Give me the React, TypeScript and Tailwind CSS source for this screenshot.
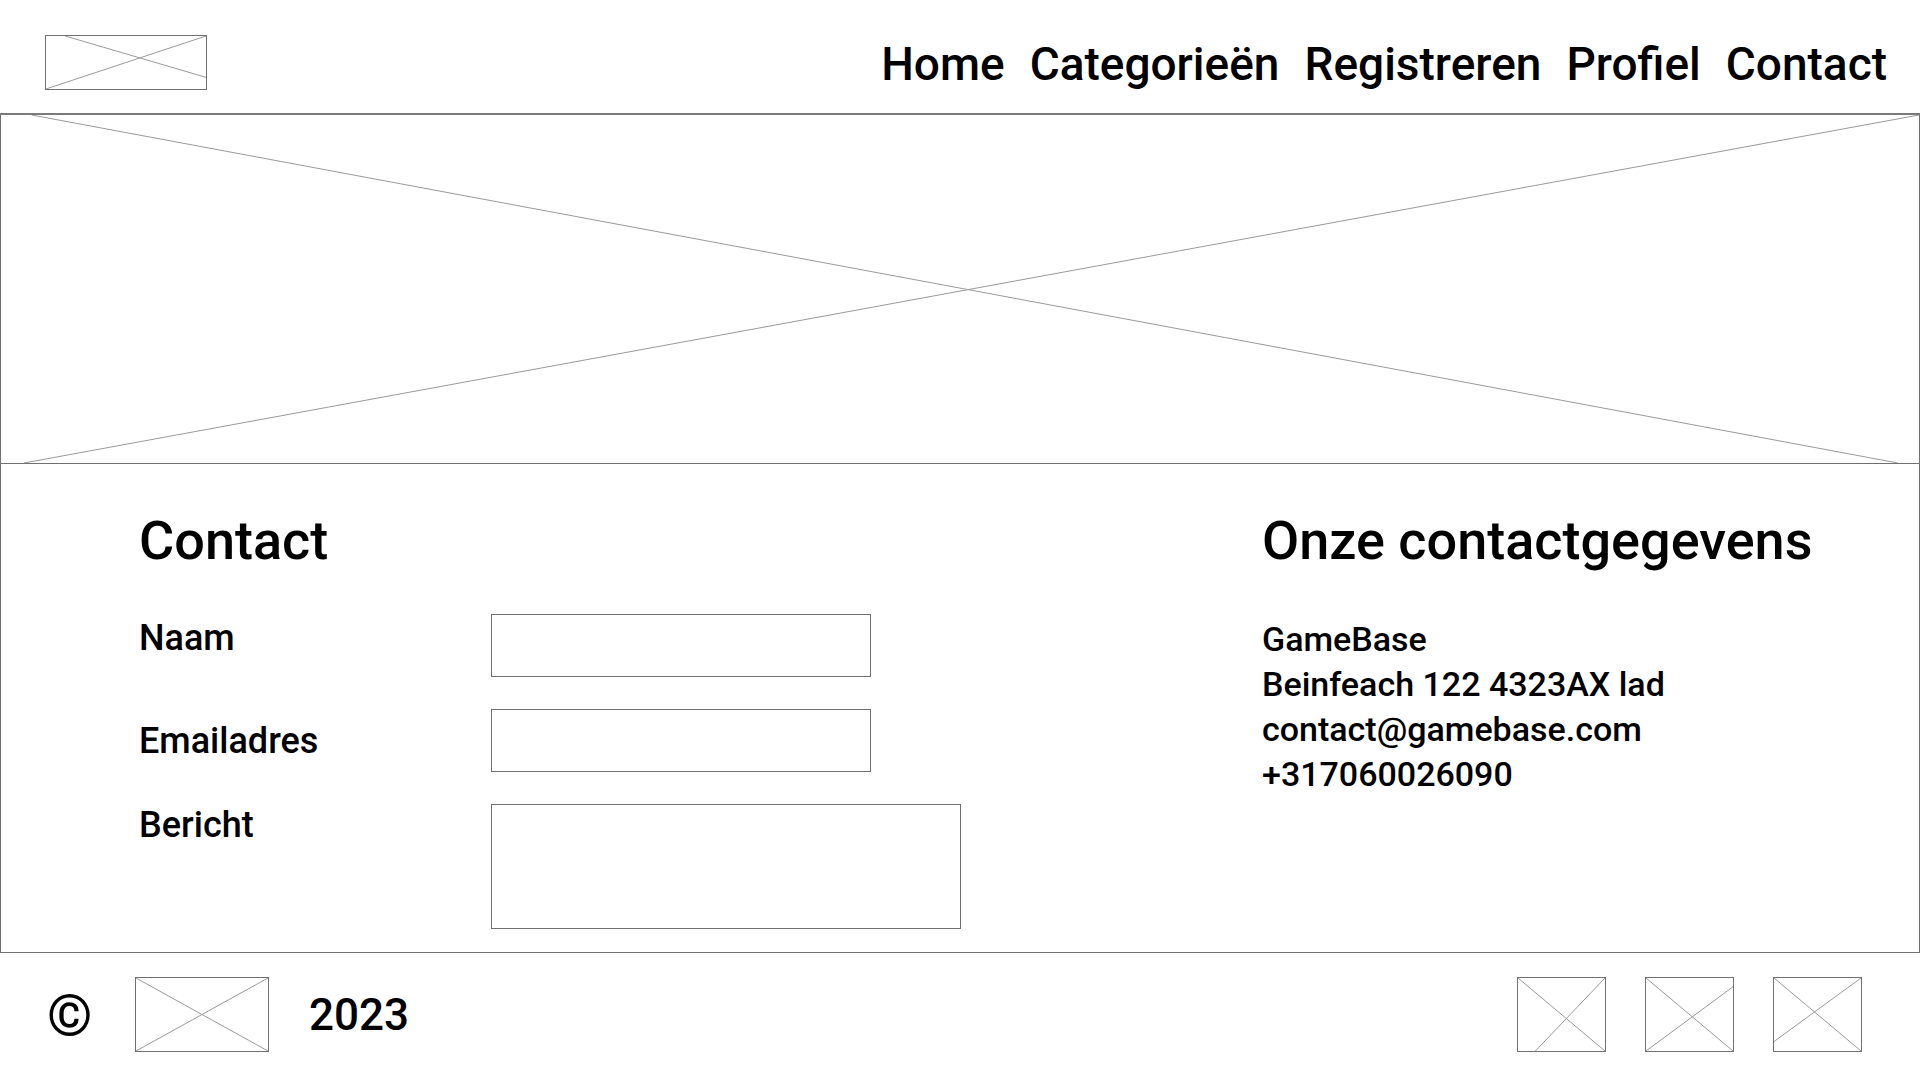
const font = { fontFamily: "Roboto, 'Noto Sans', sans-serif" };

type Line = [number, number, number, number];

const Placeholder = ({ className, lines }: { className: string; lines: Line[] }) => (
  <div className={`border border-[#707070] shrink-0 ${className}`}>
    <svg className="block w-full h-full" viewBox="0 0 100 100" preserveAspectRatio="none">
      {lines.map((l, i) => (
        <line
          key={i}
          x1={l[0]}
          y1={l[1]}
          x2={l[2]}
          y2={l[3]}
          stroke="#9a9a9a"
          strokeWidth={1}
          vectorEffect="non-scaling-stroke"
        />
      ))}
    </svg>
  </div>
);

const navItems = ["Home", "Categorieën", "Registreren", "Profiel", "Contact"];

export default function App() {
  return (
    <div className="w-[1920px] h-[1080px] flex flex-col bg-white text-black font-medium overflow-hidden" style={font}>
      {/* header */}
      <header className="h-[115px] shrink-0 flex justify-between border-b-2 border-[#7a7a7a]">
        <div className="pl-[45px] pt-[35px]">
          <Placeholder className="w-[162px] h-[55px]" lines={[[12, 0, 100, 78], [0, 100, 100, 0]]} />
        </div>
        <nav className="flex gap-[25px] pr-[33px] pt-[41px] text-[46px] leading-none">
          {navItems.map((item) => (
            <a key={item} href="#" className="block">
              {item}
            </a>
          ))}
        </nav>
      </header>

      {/* hero */}
      <Placeholder className="h-[349px] w-full border-t-0" lines={[[1.6, 0, 98.9, 100], [1.2, 100, 100, 0]]} />

      {/* content */}
      <section className="h-[489px] shrink-0 flex border-x border-b border-[#707070] pl-[138px] pt-[50px]">
        <div className="w-[1123px]">
          <h1 className="text-[54px] leading-none">Contact</h1>
          <div className="mt-[46px] flex flex-col gap-[32px] text-[36px] leading-none">
            <div className="flex">
              <label className="w-[352px] pt-[6px]">Naam</label>
              <input className="w-[380px] h-[63px] border border-[#707070] outline-none" />
            </div>
            <div className="flex">
              <label className="w-[352px] pt-[14px]">Emailadres</label>
              <input className="w-[380px] h-[63px] border border-[#707070] outline-none" />
            </div>
            <div className="flex">
              <label className="w-[352px] pt-[3px]">Bericht</label>
              <textarea className="w-[470px] h-[125px] border border-[#707070] outline-none resize-none" />
            </div>
          </div>
        </div>
        <div className="flex-1">
          <h2 className="text-[54px] leading-none">Onze contactgegevens</h2>
          <div className="mt-[49px] text-[34px] leading-[45px]">
            <p>GameBase</p>
            <p>Beinfeach 122 4323AX lad</p>
            <p>contact@gamebase.com</p>
            <p>+317060026090</p>
          </div>
        </div>
      </section>

      {/* footer */}
      <footer className="flex-1 flex justify-between items-start pt-[24px]">
        <div className="flex items-center pl-[47px]">
          <span className="text-[58px] leading-none w-[88px] font-bold">©</span>
          <Placeholder className="w-[134px] h-[75px]" lines={[[0, 0, 100, 100], [100, 0, 0, 100]]} />
          <span className="ml-[40px] text-[44px] leading-none">2023</span>
        </div>
        <div className="flex gap-[39px] pr-[58px]">
          <Placeholder className="w-[89px] h-[75px]" lines={[[0, 0, 100, 100], [100, 0, 20, 100]]} />
          <Placeholder className="w-[89px] h-[75px]" lines={[[0, 0, 100, 100], [100, 12, 0, 100]]} />
          <Placeholder className="w-[89px] h-[75px]" lines={[[0, 0, 100, 100], [100, 0, 0, 87]]} />
        </div>
      </footer>
    </div>
  );
}
